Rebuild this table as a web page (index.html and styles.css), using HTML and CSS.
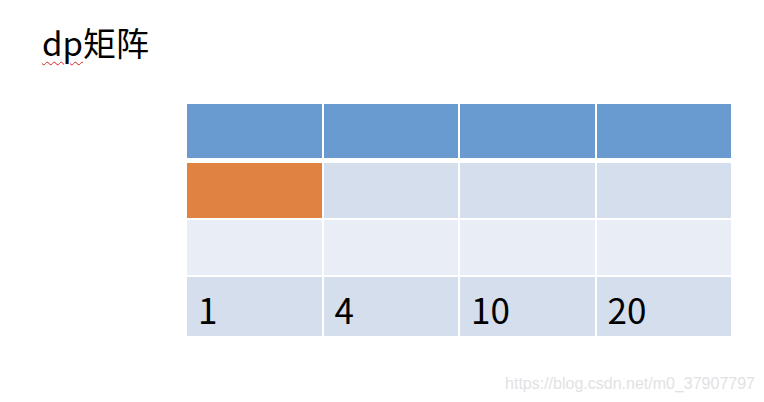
FILE: index.html
```html
<!DOCTYPE html>
<html lang="zh-CN">
<head>
    <meta charset="UTF-8">
    <title>dp矩阵</title>
    <link rel="stylesheet" href="styles.css">
</head>
<body>

    <!-- Slide -->
    <div class="slide">
        <h1 class="title"><span class="typo">dp</span>矩阵</h1>

        <!-- DP table -->
        <div class="matrix">
            <div class="cell head"></div>
            <div class="cell head"></div>
            <div class="cell head"></div>
            <div class="cell head"></div>

            <div class="cell start"></div>
            <div class="cell dark"></div>
            <div class="cell dark"></div>
            <div class="cell dark"></div>

            <div class="cell light"></div>
            <div class="cell light"></div>
            <div class="cell light"></div>
            <div class="cell light"></div>

            <div class="cell dark last">1</div>
            <div class="cell dark last">4</div>
            <div class="cell dark last">10</div>
            <div class="cell dark last">20</div>
        </div>

        <div class="watermark">https://blog.csdn.net/m0_37907797</div>
    </div>

</body>
</html>
```

FILE: styles.css
```css
/* Reset */
* {
    margin: 0;
    padding: 0;
    box-sizing: border-box;
}

body {
    font-family: "Noto Sans CJK SC", "Noto Sans", sans-serif;
    background-color: #fff;
    color: #000;
}

.slide {
    width: 764px;
    height: 402px;
    padding: 22px 0 0 42px;
    display: flex;
    flex-direction: column;
}

/* Title */
.title {
    font-size: 33px;
    font-weight: normal;
    line-height: 40px;
    height: 40px;
}

.typo {
    text-decoration: underline wavy #e02020;
    text-decoration-thickness: 1px;
    text-underline-offset: 5px;
}

/* Matrix */
.matrix {
    margin: 42px 0 0 145px;
    width: 544px;
    display: grid;
    grid-template-columns: repeat(4, 1fr);
    grid-template-rows: 59px 57px 57px 59px;
    column-gap: 2px;
}

.cell {
    display: flex;
    align-items: center;
    padding: 0 0 0 11px;
    font-size: 35px;
    line-height: 1;
}

.head {
    background-color: #699bd0;
    margin-bottom: 5px;
}

.start {
    background-color: #e08242;
    margin-bottom: 2px;
}

.dark {
    background-color: #d4deec;
}

.cell.dark:not(.last) {
    margin-bottom: 2px;
}

.light {
    background-color: #e9eef6;
    margin-bottom: 2px;
}

.last {
    padding-top: 4px;
}

/* Blog watermark */
.watermark {
    align-self: flex-end;
    margin: 39px 9px 0 0;
    font-family: "Liberation Sans", Arial, sans-serif;
    font-size: 16px;
    color: #e2e2e2;
}
```
